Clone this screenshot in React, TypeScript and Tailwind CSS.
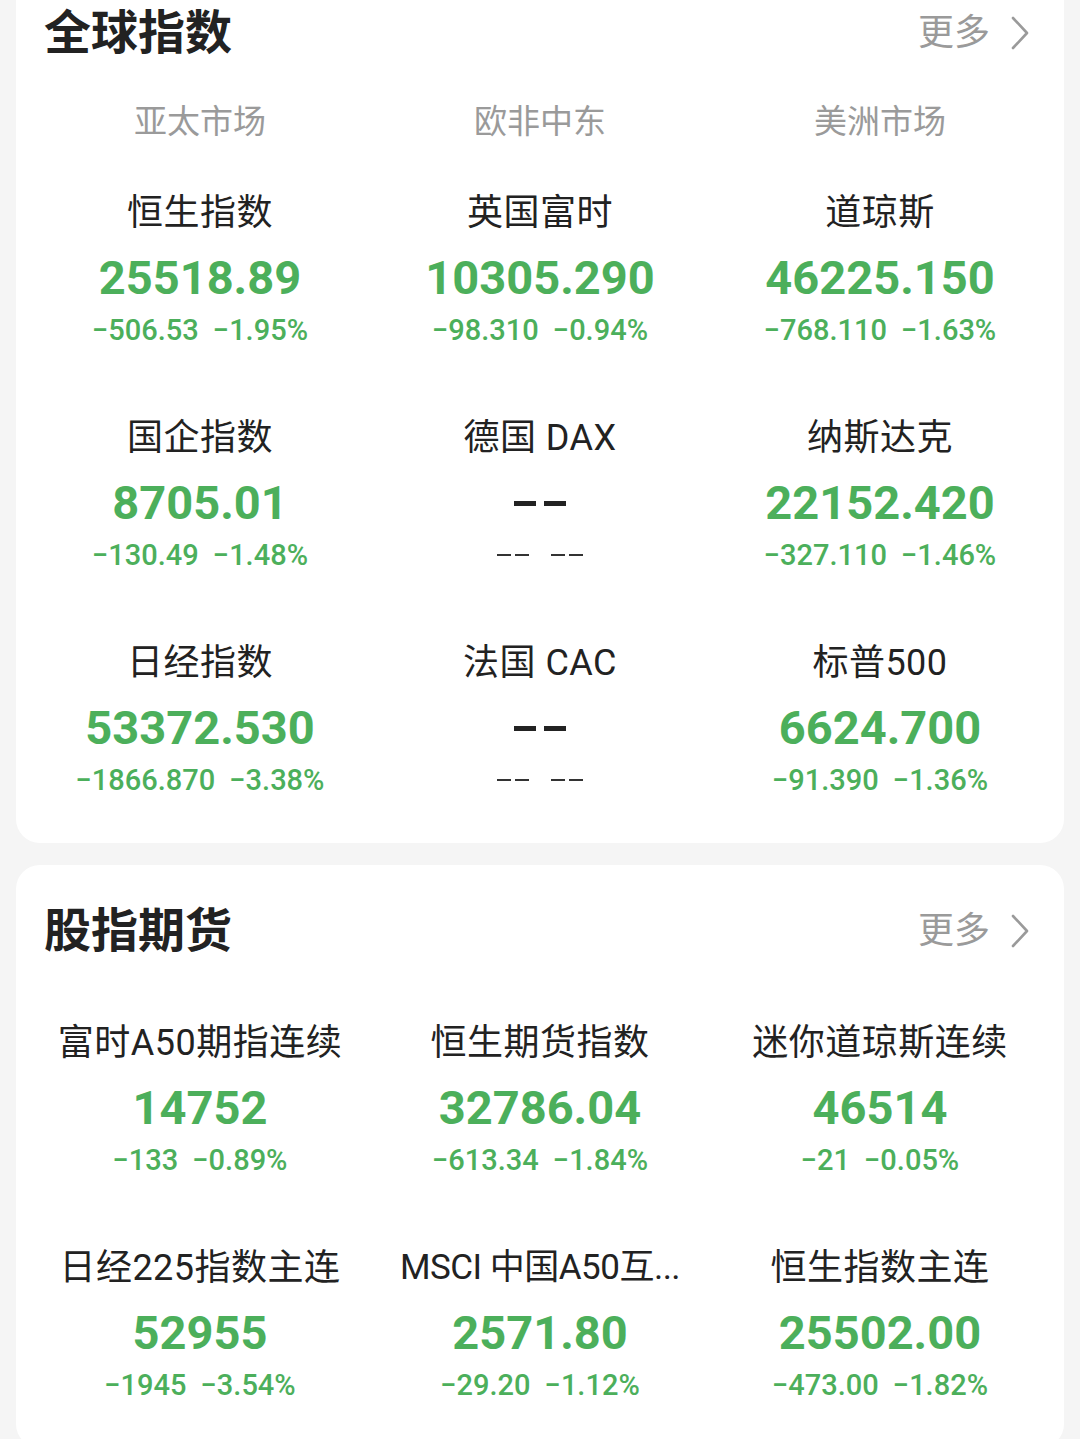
type Quote = {
  name: string;
  value: string;
  change: string;
  pct: string;
  empty?: boolean;
  tight?: boolean;
};

const globalRegions = ["亚太市场", "欧非中东", "美洲市场"];

const globalQuotes: Quote[] = [
  { name: "恒生指数", value: "25518.89", change: "−506.53", pct: "−1.95%" },
  { name: "英国富时", value: "10305.290", change: "−98.310", pct: "−0.94%" },
  { name: "道琼斯", value: "46225.150", change: "−768.110", pct: "−1.63%" },
  { name: "国企指数", value: "8705.01", change: "−130.49", pct: "−1.48%" },
  { name: "德国 DAX", value: "--", change: "--", pct: "--", empty: true },
  { name: "纳斯达克", value: "22152.420", change: "−327.110", pct: "−1.46%" },
  { name: "日经指数", value: "53372.530", change: "−1866.870", pct: "−3.38%" },
  { name: "法国 CAC", value: "--", change: "--", pct: "--", empty: true },
  { name: "标普500", value: "6624.700", change: "−91.390", pct: "−1.36%" },
];

const futures: Quote[] = [
  { name: "富时A50期指连续", value: "14752", change: "−133", pct: "−0.89%" },
  { name: "恒生期货指数", value: "32786.04", change: "−613.34", pct: "−1.84%" },
  { name: "迷你道琼斯连续", value: "46514", change: "−21", pct: "−0.05%" },
  { name: "日经225指数主连", value: "52955", change: "−1945", pct: "−3.54%" },
  { name: "MSCI 中国A50互...", value: "2571.80", change: "−29.20", pct: "−1.12%", tight: true },
  { name: "恒生指数主连", value: "25502.00", change: "−473.00", pct: "−1.82%" },
];

const font = "font-['Roboto','Noto_Sans_CJK_SC',sans-serif]";

function SectionHeader({ title }: { title: string }) {
  return (
    <div className="flex items-center justify-between pl-[28px] pr-[34px]">
      <h2 className="text-[47px] leading-[56px] font-bold text-[#222]">{title}</h2>
      <div className="flex items-center gap-[20px] text-[#9a9a9a]">
        <span className="text-[36px] leading-[40px]">更多</span>
        <svg width="20" height="34" viewBox="0 0 20 34" fill="none">
          <path d="M3 2 L17 17 L3 32" stroke="#9a9a9a" strokeWidth="2.6" strokeLinecap="round" strokeLinejoin="round" />
        </svg>
      </div>
    </div>
  );
}

function QuoteCell({ q }: { q: Quote }) {
  return (
    <div className="flex flex-col items-center">
      <div
        className={`h-[44px] leading-[44px] text-[#222] whitespace-nowrap ${
          q.tight ? "text-[35px] tracking-[-0.5px]" : "text-[36px] tracking-[0.5px]"
        }`}
      >
        {q.name}
      </div>
      {q.empty ? (
        <>
          <div className="mt-[15px] h-[56px] flex items-center gap-[8px]">
            <span className="block w-[22px] h-[5px] bg-[#222]" />
            <span className="block w-[22px] h-[5px] bg-[#222]" />
          </div>
          <div className="mt-[6px] h-[36px] flex items-center gap-[22px]">
            <span className="flex gap-[4px]">
              <span className="block w-[14px] h-[2px] bg-[#333]" />
              <span className="block w-[14px] h-[2px] bg-[#333]" />
            </span>
            <span className="flex gap-[4px]">
              <span className="block w-[14px] h-[2px] bg-[#333]" />
              <span className="block w-[14px] h-[2px] bg-[#333]" />
            </span>
          </div>
        </>
      ) : (
        <>
          <div className="mt-[15px] h-[56px] text-[47px] leading-[56px] font-bold text-[#4caf5b]">{q.value}</div>
          <div className="mt-[6px] h-[36px] text-[29px] leading-[36px] font-medium text-[#4caf5b] flex gap-[14px]">
            <span>{q.change}</span>
            <span>{q.pct}</span>
          </div>
        </>
      )}
    </div>
  );
}

export default function App() {
  return (
    <div className={`min-h-screen bg-[#f5f5f5] overflow-hidden ${font}`}>
      <div className="-mt-[33px] mx-[16px] flex flex-col gap-[22px]">
        <section className="bg-white rounded-[24px] pt-[38px] pb-[45px]">
          <SectionHeader title="全球指数" />
          <div className="mt-[41px] px-[14px] grid grid-cols-3">
            {globalRegions.map((r) => (
              <div key={r} className="text-center text-[33px] leading-[40px] text-[#9a9a9a]">
                {r}
              </div>
            ))}
          </div>
          <div className="mt-[49px] px-[14px] grid grid-cols-3 gap-y-[68px]">
            {globalQuotes.map((q) => (
              <QuoteCell key={q.name} q={q} />
            ))}
          </div>
        </section>

        <section className="bg-white rounded-[24px] pt-[38px] pb-[45px]">
          <SectionHeader title="股指期货" />
          <div className="mt-[62px] px-[14px] grid grid-cols-3 gap-y-[68px]">
            {futures.map((q) => (
              <QuoteCell key={q.name} q={q} />
            ))}
          </div>
        </section>
      </div>
    </div>
  );
}
